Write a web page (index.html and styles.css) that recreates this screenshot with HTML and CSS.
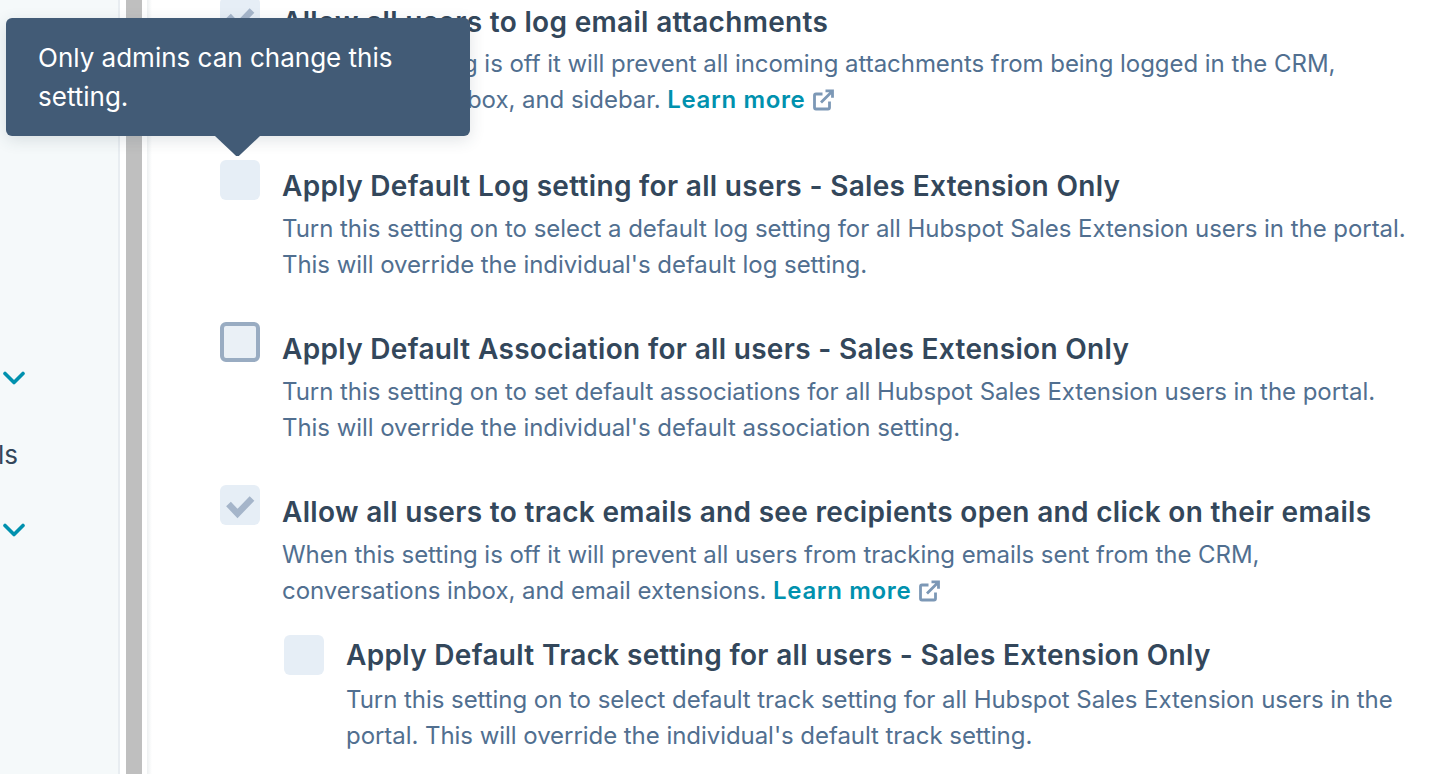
FILE: index.html
```html
<!DOCTYPE html>
<html lang="en">
<head>
<meta charset="utf-8">
<title>Email settings</title>
<link rel="stylesheet" href="styles.css">
</head>
<body>
<div class="page">
  <aside class="sidebar">
    <svg class="chevron" viewBox="0 0 24 14"><path d="M3 2.5l9 9 9-9"/></svg>
    <div class="side-label"><span>Calls</span></div>
    <svg class="chevron" viewBox="0 0 24 14"><path d="M3 2.5l9 9 9-9"/></svg>
  </aside>
  <div class="gutter"></div>
  <div class="scrollbar"></div>
  <div class="gutter-right"></div>
  <main class="content">
    <section class="row row-first">
      <span class="box"><svg viewBox="0 0 40 40"><path d="M8.5 19l9 9.500L32 13.500"/></svg></span>
      <div class="text">
        <h3 class="title">Allow all users to log email attachments</h3>
        <p class="desc">When this setting is off it will prevent all incoming attachments from being logged in the CRM,<br>conversations inbox, and sidebar. <a class="link">Learn more</a> <svg class="ext" viewBox="0 0 22 22"><path d="M17.500 12.500v6a1.500 1.500 0 0 1-1.500 1.500H4a1.500 1.500 0 0 1-1.500-1.500V6.500A1.500 1.500 0 0 1 4 5h6.500M9 13.500L20 2.500M13.500 1.800h7v7"/></svg></p>
      </div>
    </section>
    <section class="row row-short">
      <span class="box"></span>
      <div class="text">
        <h3 class="title">Apply Default Log setting for all users - Sales Extension Only</h3>
        <p class="desc">Turn this setting on to select a default log setting for all Hubspot Sales Extension users in the portal.<br>This will override the individual's default log setting.</p>
      </div>
    </section>
    <section class="row">
      <span class="box box-focus"></span>
      <div class="text">
        <h3 class="title">Apply Default Association for all users - Sales Extension Only</h3>
        <p class="desc">Turn this setting on to set default associations for all Hubspot Sales Extension users in the portal.<br>This will override the individual's default association setting.</p>
      </div>
    </section>
    <section class="row">
      <span class="box"><svg viewBox="0 0 40 40"><path d="M8.5 19l9 9.500L32 13.500"/></svg></span>
      <div class="text">
        <h3 class="title">Allow all users to track emails and see recipients open and click on their emails</h3>
        <p class="desc">When this setting is off it will prevent all users from tracking emails sent from the CRM,<br>conversations inbox, and email extensions. <a class="link">Learn more</a> <svg class="ext" viewBox="0 0 22 22"><path d="M17.500 12.500v6a1.500 1.500 0 0 1-1.500 1.500H4a1.500 1.500 0 0 1-1.500-1.500V6.500A1.500 1.500 0 0 1 4 5h6.500M9 13.500L20 2.500M13.500 1.800h7v7"/></svg></p>
      </div>
    </section>
    <section class="row row-nested">
      <span class="box"></span>
      <div class="text">
        <h3 class="title">Apply Default Track setting for all users - Sales Extension Only</h3>
        <p class="desc">Turn this setting on to select default track setting for all Hubspot Sales Extension users in the<br>portal. This will override the individual's default track setting.</p>
      </div>
    </section>
  </main>
</div>
<div class="tooltip">
  Only admins can change this setting.
  <span class="tooltip-arrow"></span>
</div>
</body>
</html>
```
FILE: styles.css
```css
* { box-sizing: border-box; }
html, body { margin: 0; height: 100%; overflow: hidden; background: #fff; }
body { font-family: Inter, "Noto Sans", sans-serif; color: #33475b; }
.page { display: flex; height: 774px; overflow: hidden; }
.sidebar {
  width: 120px; flex: none; background: #f5f9fa; border-right: 2px solid #e8edf1;
  display: flex; flex-direction: column; align-items: flex-start; padding: 371px 0 0 2px;
}
.chevron { width: 24px; height: 14px; flex: none; fill: none; stroke: #0091ae; stroke-width: 3.6; stroke-linecap: round; stroke-linejoin: round; }
.side-label { width: 18px; height: 36px; margin: 52px 0 50px -2px; overflow: hidden; display: flex; justify-content: flex-end; font-size: 26px; line-height: 36px; color: #33475b; white-space: nowrap; }
.gutter { width: 6px; flex: none; }
.scrollbar { width: 16px; flex: none; background: #bfbfbf; }
.gutter-right { width: 10px; flex: none; background: linear-gradient(90deg, #fff 0 5px, #edf0f1 5px, #fff 100%); }
.content { flex: 1; min-width: 0; padding: 0 0 0 68px; margin-top: -3px; }
.row { display: flex; gap: 22px; height: 163px; }
.row-short { height: 162px; }
.row-first .text { margin-top: -2px; }
.row-nested { margin-left: 64px; margin-top: -13px; }
.box { width: 40px; height: 40px; flex: none; border-radius: 6px; background: #e6eef6; }
.box svg { display: block; width: 40px; height: 40px; fill: none; stroke: #a5b5ca; stroke-width: 6.5; }
.box-focus { border: 4px solid #99acc2; background: #eaf0f6; }
.text { min-width: 0; }
.title { margin: 9px 0 0; font-size: 28px; line-height: 36px; font-weight: 600; letter-spacing: .32px; color: #33475b; white-space: nowrap; }
.desc { margin: 7px 0 0; font-size: 24px; line-height: 36px; letter-spacing: -.05px; color: #516f90; white-space: nowrap; }
.row-first .desc { margin-top: 6px; }
.row-short .title { margin-top: 8px; }
.row-nested .title { margin-top: 2px; }
.row-nested .desc { margin-top: 9px; }
.link { color: #0091ae; font-weight: 600; letter-spacing: .65px; }
.ext { width: 22px; height: 22px; vertical-align: -3px; fill: none; stroke: #7c98b6; stroke-width: 2.8; }
.tooltip {
  position: absolute; left: 6px; top: 18px; width: 464px; height: 118px; padding: 20px 32px;
  background: #425b76; color: #fff; border-radius: 6px; font-size: 26px; line-height: 39px;
  box-shadow: 0 4px 16px rgba(45, 62, 80, .14);
}
.tooltip-arrow { position: absolute; left: 209px; top: 118px; width: 45px; height: 20px; background: #425b76; clip-path: polygon(0 0, 100% 0, 53% 100%, 47% 100%); }
```
